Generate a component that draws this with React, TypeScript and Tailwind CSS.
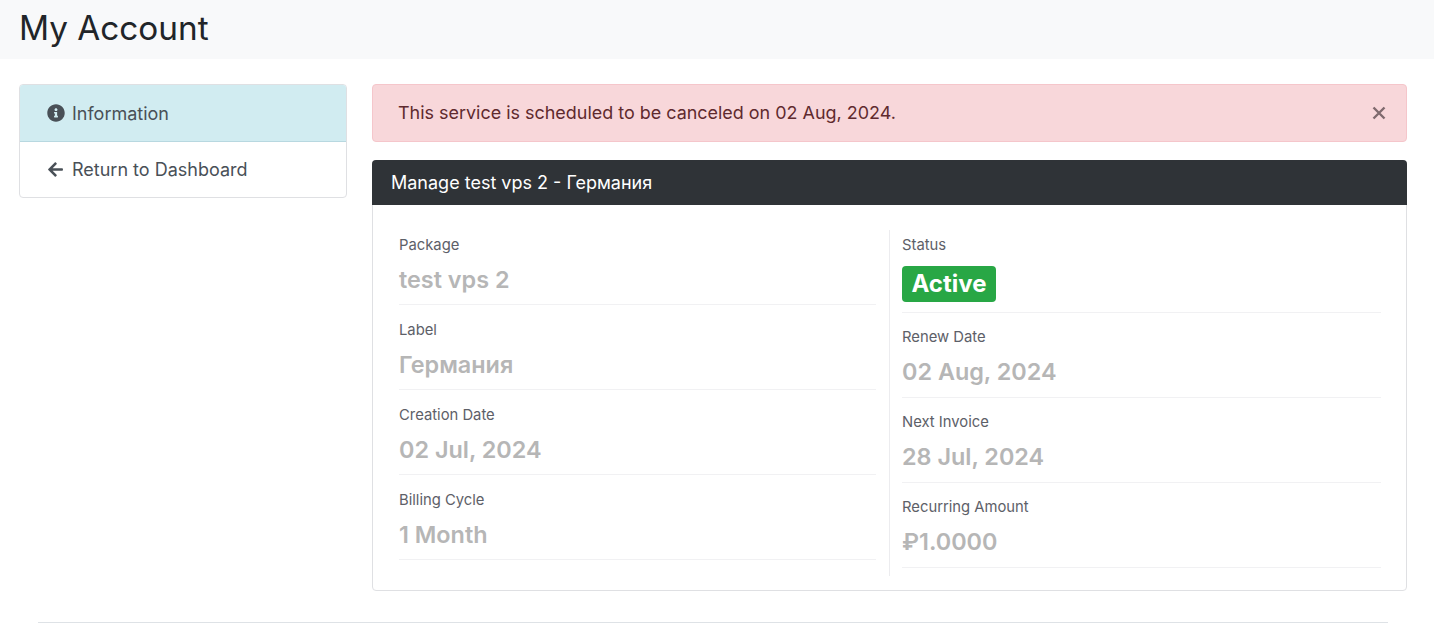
import { FaArrowLeft, FaInfoCircle } from "react-icons/fa";

interface FieldProps {
  label: string;
  value: string;
  right?: boolean;
}

function Field({ label, value, right }: FieldProps) {
  return (
    <div className={`mb-[10px] h-[75px] border-b border-[#f1f1f3] ${right ? "pt-[4px]" : "pt-[5px]"}`}>
      <p className="text-[14.8px] leading-[21px] text-[#5d6068]">{label}</p>
      <p className="mt-[6px] text-[23.4px] leading-[36px] font-semibold text-[#b6b6b6]">{value}</p>
    </div>
  );
}

export default function App() {
  return (
    <div className="h-[628px] overflow-hidden bg-white font-['Inter',sans-serif] text-[#212529]">
      <div className="h-[59px] bg-[#f8f9fa] pl-[19px] pt-[8px]">
        <h1 className="text-[33.3px] leading-[40px] font-normal text-[#212529]">My Account</h1>
      </div>

      <div className="flex gap-[25px] pl-[19px] pr-[27px] pt-[25px]">
        <div className="w-[328px] shrink-0">
          <div className="overflow-hidden rounded border border-[#dfe0e3] text-[18px] text-[#495057]">
            <div className="-mx-px -mt-px flex h-[58px] items-center border border-[#b8d8e0] bg-[#d1ecf1] pl-[27px]">
              <FaInfoCircle className="mr-[7px] h-[18px] w-[18px] text-[#495057]" />
              <span>Information</span>
            </div>
            <div className="flex h-[55px] items-center pl-[27px]">
              <FaArrowLeft className="mr-[8px] h-[17px] w-[17px] text-[#495057]" />
              <span>Return to Dashboard</span>
            </div>
          </div>
        </div>

        <div className="flex-1">
          <div className="flex h-[58px] items-center justify-between rounded border border-[#f5c6cb] bg-[#f8d7da] pl-[25px] pr-[20px] text-[17.96px] text-[#5f2a2e]">
            <span>This service is scheduled to be canceled on 02 Aug, 2024.</span>
            <svg width="14" height="14" viewBox="0 0 14 14" className="text-[#7f6a6e]">
              <path d="M1.5 1.5 L12.5 12.5 M12.5 1.5 L1.5 12.5" stroke="currentColor" strokeWidth="2.4" fill="none" />
            </svg>
          </div>

          <div className="mt-[18px] rounded border border-[#dfe0e3]">
            <div className="-mx-px -mt-px flex h-[45px] items-center rounded-t bg-[#2f3337] pl-[19px] text-[18px] text-white">
              Manage test vps 2 - Германия
            </div>
            <div className="flex h-[385px] pl-[26px] pr-[25px] pt-[25px]">
              <div className="w-[477px] shrink-0">
                <Field label="Package" value="test vps 2" />
                <Field label="Label" value="Германия" />
                <Field label="Creation Date" value="02 Jul, 2024" />
                <Field label="Billing Cycle" value="1 Month" />
              </div>
              <div className="ml-[13px] h-[346px] flex-1 border-l border-[#ececef] pl-[12px]">
                <div className="mb-[10px] h-[83px] border-b border-[#f1f1f3] pt-[5px]">
                  <p className="text-[14.8px] leading-[21px] text-[#5d6068]">Status</p>
                  <span className="mt-[10px] inline-flex h-[36px] w-[94px] items-center justify-center rounded bg-[#28a745] text-[24px] font-bold text-white">Active</span>
                </div>
                <Field right label="Renew Date" value="02 Aug, 2024" />
                <Field right label="Next Invoice" value="28 Jul, 2024" />
                <Field right label="Recurring Amount" value="₽1.0000" />
              </div>
            </div>
          </div>
        </div>
      </div>

      <div className="ml-[38px] mr-[46px] mt-[31px] border-t border-[#dee2e6]" />
    </div>
  );
}
